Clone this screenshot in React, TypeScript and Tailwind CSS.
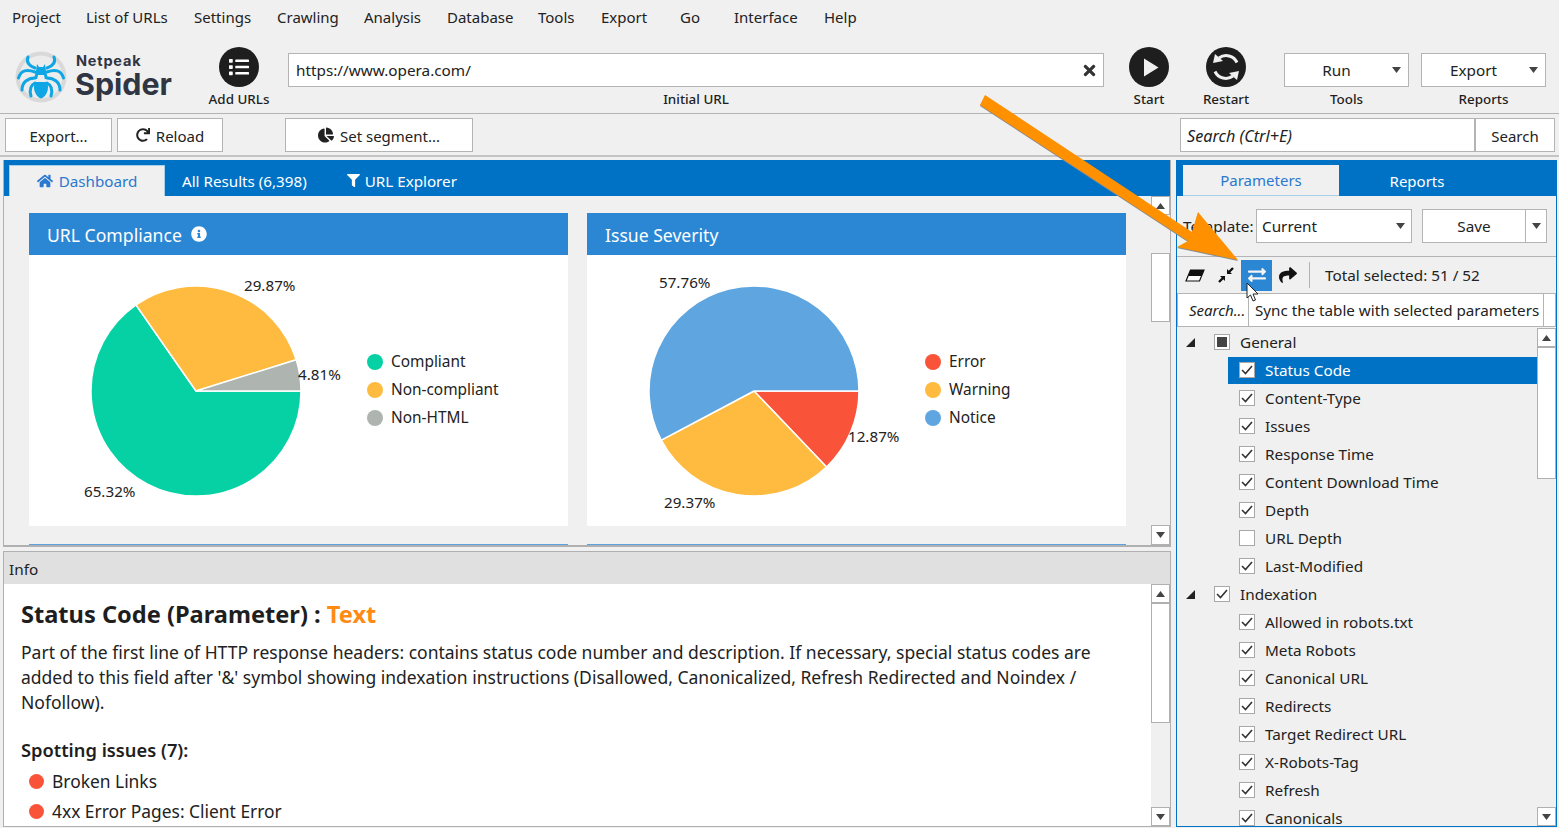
import React from "react";
import { FaList, FaRedo, FaChartPie, FaHome, FaFilter, FaInfoCircle, FaTimes, FaExchangeAlt, FaShare } from "react-icons/fa";

const Tri = ({ up = false, className = "" }: { up?: boolean; className?: string }) => (
  <svg width="9" height="6" viewBox="0 0 9 6" className={className}>
    <polygon points={up ? "4.5,0 9,6 0,6" : "0,0 9,0 4.5,6"} fill="#444" />
  </svg>
);

const ScrollBtn = ({ up = false, h = "h-[19px]" }: { up?: boolean; h?: string }) => (
  <div className={`w-full ${h} shrink-0 bg-white border border-[#b0b0b0] flex items-center justify-center`}>
    <Tri up={up} />
  </div>
);

const Btn = ({ children, className = "" }: { children: React.ReactNode; className?: string }) => (
  <div className={`h-[34px] pt-[2px] bg-white border border-[#b4b4b4] flex items-center justify-center gap-[6px] ${className}`}>{children}</div>
);

const ToolCol = ({ label, className, children, end = false }: { label: string; className: string; children: React.ReactNode; end?: boolean }) => (
  <div className={`flex flex-col items-center shrink-0 ${className}`}>
    <div className={`h-[40px] w-full flex justify-center ${end ? "items-end" : "items-center"}`}>{children}</div>
    <div className="mt-[4px] h-[16px] leading-[16px] text-[13.4px] font-medium text-[#1e1e1e] whitespace-nowrap">{label}</div>
  </div>
);

const Circle = ({ children }: { children: React.ReactNode }) => (
  <div className="w-[40px] h-[40px] rounded-full bg-[#1e1e1e] flex items-center justify-center text-white">{children}</div>
);

const DropBtn = ({ label }: { label: string }) => (
  <div className="relative w-[125px] h-[34px] pt-[1px] bg-white border border-[#b4b4b4] flex items-center justify-center text-[15.3px] pr-[20px]">
    {label}
    <Tri className="absolute right-[7px] top-[13px]" />
  </div>
);

const Logo = () => (
  <svg width="52" height="52" viewBox="0 0 52 52" className="shrink-0">
    <circle cx="26" cy="26" r="25.5" fill="#d9d9d9" />
    <circle cx="26" cy="26" r="21.5" fill="#ececec" />
    <g fill="none" stroke="#0ea6e4" strokeWidth="3" strokeLinecap="round">
      <path d="M20 17 C14 15 11 11 13 6" />
      <path d="M32 17 C38 15 41 11 39 6" />
      <path d="M20 21 C12 18 6 19 3.5 27" />
      <path d="M32 21 C40 18 46 19 48.5 27" />
      <path d="M20 27 C13 27 7 31 7 39" />
      <path d="M32 27 C39 27 45 31 45 39" />
      <path d="M20 32 C16 34 14 38 16 45" />
      <path d="M32 32 C36 34 38 38 36 45" />
    </g>
    <polygon points="22,13 24,16 28,16 30,13 31,20 33,28 19,28 21,20" fill="#0ea6e4" />
    <path d="M20 31 L32 31 C35 38 31 46 26 47.5 C21 46 17 38 20 31Z" fill="#0ea6e4" />
    <polygon points="23,24 29,24 30,29 22,29" fill="#ececec" />
  </svg>
);

const polar = (cx: number, cy: number, r: number, deg: number) => {
  const a = (deg * Math.PI) / 180;
  return [cx + r * Math.cos(a), cy + r * Math.sin(a)];
};

const Pie = ({ slices, labels }: { slices: { from: number; to: number; color: string }[]; labels: { x: number; y: number; t: string }[] }) => (
  <svg width="339" height="271" viewBox="0 0 339 271" className="shrink-0">
    {slices.map((s, i) => {
      const [x1, y1] = polar(167, 136, 105, s.from);
      const [x2, y2] = polar(167, 136, 105, s.to);
      const large = s.to - s.from > 180 ? 1 : 0;
      return <path key={i} d={`M167 136 L${x1} ${y1} A105 105 0 ${large} 1 ${x2} ${y2} Z`} fill={s.color} stroke="#fff" strokeWidth="1.5" />;
    })}
    {labels.map((l) => (
      <text key={l.t} x={l.x} y={l.y} fontSize="15.2" fill="#222">{l.t}</text>
    ))}
  </svg>
);

const Legend = ({ items }: { items: [string, string][] }) => (
  <div className="flex flex-col gap-[8px] -mt-[1px] -ml-[1px]">
    {items.map(([t, c]) => (
      <div key={t} className="flex items-center h-[20px] gap-[8px] text-[15.4px] leading-[20px] text-[#222]">
        <span className="w-[16px] h-[16px] rounded-full shrink-0" style={{ backgroundColor: c }} />
        {t}
      </div>
    ))}
  </div>
);

const Card = ({ title, icon, children }: { title: string; icon?: React.ReactNode; children?: React.ReactNode }) => (
  <div className="w-[539px] shrink-0">
    <div className="h-[42px] pt-[2px] bg-[#2b87d4] text-white flex items-center pl-[18px] gap-[9px] text-[17.6px]">
      {title}
      {icon}
    </div>
    <div className="h-[271px] bg-white flex items-center">{children}</div>
  </div>
);

const Check = ({ on = true, dark = false }: { on?: boolean; dark?: boolean }) => (
  <span className="w-[16px] h-[16px] bg-white border border-[#a8a8a8] shrink-0 flex items-center justify-center">
    {dark && <span className="w-[10px] h-[10px] bg-[#444]" />}
    {on && !dark && (
      <svg width="14" height="14" viewBox="0 0 14 14">
        <path d="M2 7 L5.5 10.5 L12 3" fill="none" stroke="#333" strokeWidth="1.6" />
      </svg>
    )}
  </span>
);

const Group = ({ label, dark }: { label: string; dark?: boolean }) => (
  <div className="h-[28px] flex items-center pl-[9px] shrink-0">
    <svg width="9" height="9" viewBox="0 0 9 9" className="shrink-0">
      <polygon points="9,0 9,9 0,9" fill="#222" />
    </svg>
    <span className="ml-[19px]"><Check dark={dark} /></span>
    <span className="ml-[10px]">{label}</span>
  </div>
);

const Item = ({ label, on = true, selected = false }: { label: string; on?: boolean; selected?: boolean }) => (
  <div className="h-[28px] pl-[51px] flex items-center shrink-0">
    <div className={`w-full h-[27px] flex items-center pl-[11px] ${selected ? "bg-[#0072c6] text-white" : ""}`}>
      <Check on={on} />
      <span className="ml-[10px]">{label}</span>
    </div>
  </div>
);

const general = ["Content-Type", "Issues", "Response Time", "Content Download Time", "Depth"];
const index = ["Allowed in robots.txt", "Meta Robots", "Canonical URL", "Redirects", "Target Redirect URL", "X-Robots-Tag", "Refresh", "Canonicals"];
const menu: [string, string][] = [
  ["Project", "w-[74px]"], ["List of URLs", "w-[108px]"], ["Settings", "w-[83px]"], ["Crawling", "w-[87px]"], ["Analysis", "w-[83px]"],
  ["Database", "w-[91px]"], ["Tools", "w-[63px]"], ["Export", "w-[79px]"], ["Go", "w-[54px]"], ["Interface", "w-[90px]"], ["Help", "w-[60px]"],
];

export default function App() {
  return (
    <div className="relative w-[1559px] h-[828px] overflow-hidden bg-[#f0f0f0] text-[#222] text-[15.3px] font-['Noto_Sans',sans-serif] flex flex-col">
      <div className="h-[36px] shrink-0 flex items-center pl-[12px] pb-[2px] text-[15px]">
        {menu.map(([m, w]) => <div key={m} className={w}>{m}</div>)}
      </div>

      <div className="h-[78px] shrink-0 border-b border-[#b4b4b4] flex items-start pt-[11px]">
        <div className="w-[184px] ml-[15px] h-[56px] flex items-center shrink-0 pt-[3px]">
          <Logo />
          <div className="ml-[8px] font-['Inter',sans-serif] font-bold text-[#2f3542] flex flex-col">
            <span className="ml-[1px] text-[14.5px] leading-[15px] tracking-[0.8px]">Netpeak</span>
            <span className="text-[30.4px] leading-[33px]">Spider</span>
          </div>
        </div>
        <ToolCol label="Add URLs" className="w-[80px]"><Circle><FaList size={20} /></Circle></ToolCol>
        <ToolCol label="Initial URL" className="w-[816px] ml-[9px]" end>
          <div className="w-full h-[34px] bg-white border border-[#b4b4b4] flex items-center justify-between pl-[7px] pr-[5px]">
            <span>https://www.opera.com/</span>
            <FaTimes size={17} className="text-[#333]" />
          </div>
        </ToolCol>
        <ToolCol label="Start" className="w-[60px] ml-[15px]">
          <Circle>
            <svg width="16" height="19" viewBox="0 0 16 19" className="ml-[3px]"><polygon points="1,0.5 15.5,9.5 1,18.5" fill="#f0f0f0" /></svg>
          </Circle>
        </ToolCol>
        <ToolCol label="Restart" className="w-[60px] ml-[17px]">
          <Circle>
            <svg width="40" height="40" viewBox="0 0 40 40">
              <path d="M31 15.5 A12 12 0 0 0 13 11" fill="none" stroke="#f0f0f0" strokeWidth="3" />
              <polygon points="7,16 9,7 17,14" fill="#f0f0f0" />
              <path d="M9 24.5 A12 12 0 0 0 27 29" fill="none" stroke="#f0f0f0" strokeWidth="3" />
              <polygon points="33,24 31,33 23,26" fill="#f0f0f0" />
            </svg>
          </Circle>
        </ToolCol>
        <ToolCol label="Tools" className="w-[125px] ml-[28px]" end><DropBtn label="Run" /></ToolCol>
        <ToolCol label="Reports" className="w-[125px] ml-[12px]" end><DropBtn label="Export" /></ToolCol>
      </div>

      <div className="h-[43px] shrink-0 border-b-2 border-[#c4c4c4] flex items-start pt-[4px] pl-[5px] text-[15px]">
        <Btn className="w-[107px]">Export...</Btn>
        <Btn className="w-[106px] ml-[5px]"><FaRedo size={14} className="text-[#222] -mt-[2px]" />Reload</Btn>
        <Btn className="w-[188px] ml-[62px]"><FaChartPie size={16} className="text-[#222] -mt-[2px]" />Set segment...</Btn>
        <div className="w-[295px] ml-[707px] h-[34px] pt-[2px] bg-white border border-[#b4b4b4] flex items-center pl-[6px] italic text-[16.2px]">Search (Ctrl+E)</div>
        <Btn className="w-[80px]">Search</Btn>
      </div>

      <div className="flex-1 min-h-0 flex pt-[3px] pl-[3px] pr-[2px] pb-[1px] gap-[5px]">
        <div className="w-[1168px] flex flex-col gap-[4px] shrink-0">
          <div className="h-[387px] shrink-0 border-x border-b-2 border-[#b0b0b0] flex flex-col overflow-hidden">
            <div className="h-[36px] shrink-0 bg-[#0072c6] flex items-end pl-[5px] text-[15.2px] text-white">
              <div className="w-[156px] h-[31px] pt-[1px] bg-[#f0f0f0] border-x border-t border-[#a8cfe8] flex items-center justify-center gap-[6px] text-[#2b78cf]">
                <FaHome size={16} className="-mt-[2px]" />Dashboard
              </div>
              <div className="ml-[17px] h-[31px] pt-[1px] flex items-center">All Results (6,398)</div>
              <div className="ml-[41px] h-[31px] pt-[1px] flex items-center gap-[5px]"><FaFilter size={13} className="-ml-[1px] -mt-[2px]" />URL Explorer</div>
            </div>
            <div className="flex-1 min-h-0 flex">
              <div className="flex-1 min-w-0 pl-[25px] pt-[17px] flex flex-col gap-[18px] overflow-hidden">
                <div className="flex gap-[19px]">
                  <Card title="URL Compliance" icon={<FaInfoCircle size={16} className="-mt-[2px]" />}>
                    <Pie
                      slices={[
                        { from: 0, to: 235.14, color: "#05d1a5" },
                        { from: 235.14, to: 342.68, color: "#ffbb40" },
                        { from: 342.68, to: 360, color: "#aeb4af" },
                      ]}
                      labels={[{ x: 215, y: 36, t: "29.87%" }, { x: 269, y: 125, t: "4.81%" }, { x: 55, y: 242, t: "65.32%" }]}
                    />
                    <Legend items={[["Compliant", "#05d1a5"], ["Non-compliant", "#ffbb40"], ["Non-HTML", "#aeb4af"]]} />
                  </Card>
                  <Card title="Issue Severity">
                    <Pie
                      slices={[
                        { from: 0, to: 46.33, color: "#f95439" },
                        { from: 46.33, to: 152.06, color: "#ffbb40" },
                        { from: 152.06, to: 360, color: "#5fa5e0" },
                      ]}
                      labels={[{ x: 72, y: 33, t: "57.76%" }, { x: 261, y: 187, t: "12.87%" }, { x: 77, y: 253, t: "29.37%" }]}
                    />
                    <Legend items={[["Error", "#f95439"], ["Warning", "#ffbb40"], ["Notice", "#5fa5e0"]]} />
                  </Card>
                </div>
                <div className="flex gap-[19px] shrink-0">
                  <div className="w-[539px] h-[10px] bg-[#5ba3e0]" />
                  <div className="w-[539px] h-[10px] bg-[#5ba3e0]" />
                </div>
              </div>
              <div className="w-[19px] shrink-0 flex flex-col">
                <ScrollBtn up />
                <div className="h-[38px] shrink-0" />
                <div className="h-[69px] shrink-0 bg-white border border-[#b0b0b0]" />
                <div className="flex-1" />
                <ScrollBtn h="h-[20px]" />
              </div>
            </div>
          </div>

          <div className="flex-1 min-h-0 border border-[#b0b0b0] flex flex-col">
            <div className="h-[32px] pt-[2px] shrink-0 bg-[#e0e0e0] flex items-center pl-[5px]">Info</div>
            <div className="flex-1 min-h-0 bg-white flex">
              <div className="flex-1 min-w-0 pl-[17px] pr-[8px] pt-[14px] overflow-hidden">
                <div className="text-[23.6px] leading-[32px] font-bold text-[#1e1e1e]">
                  Status Code (Parameter) : <span className="text-[#ff8a14]">Text</span>
                </div>
                <p className="mt-[10px] text-[17.5px] leading-[25px] text-[#222]">
                  Part of the first line of HTTP response headers: contains status code number and description. If necessary, special status codes are added to this field after '&' symbol showing indexation instructions (Disallowed, Canonicalized, Refresh Redirected and Noindex / Nofollow).
                </p>
                <div className="mt-[22px] text-[18.3px] leading-[25px] font-semibold text-[#1e1e1e]">Spotting issues (7):</div>
                <div className="mt-[4px] flex flex-col text-[17.4px] leading-[30px] pl-[8px]">
                  {["Broken Links", "4xx Error Pages: Client Error"].map((t) => (
                    <div key={t} className="flex items-center gap-[8px]">
                      <span className="w-[15px] h-[15px] rounded-full bg-[#f95439] shrink-0" />
                      {t}
                    </div>
                  ))}
                </div>
              </div>
              <div className="w-[19px] shrink-0 flex flex-col bg-[#f0f0f0]">
                <ScrollBtn up />
                <div className="h-[120px] shrink-0 bg-white border border-[#b0b0b0]" />
                <div className="flex-1" />
                <ScrollBtn />
              </div>
            </div>
          </div>
        </div>

        <div className="w-[381px] shrink-0 border-x border-b border-[#0072c6] flex flex-col overflow-hidden">
          <div className="h-[36px] shrink-0 bg-[#0072c6] flex items-end pl-[6px] text-[15px] text-white">
            <div className="w-[156px] h-[31px] pt-[1px] bg-[#f0f0f0] border-b border-[#a8cfe8] flex items-center justify-center text-[#2b78cf]">Parameters</div>
            <div className="w-[156px] h-[31px] pt-[1px] flex items-center justify-center">Reports</div>
          </div>
          <div className="h-[61px] shrink-0 border-b border-[#b4b4b4] flex items-center pl-[6px]">
            <span className="w-[73px] shrink-0">Template:</span>
            <div className="relative w-[156px] h-[34px] bg-white border border-[#b4b4b4] flex items-center pl-[5px]">
              Current
              <Tri className="absolute right-[6px] top-[13px]" />
            </div>
            <div className="ml-[10px] w-[125px] h-[34px] bg-white border border-[#b4b4b4] flex">
              <div className="w-[103px] border-r border-[#b4b4b4] flex items-center justify-center">Save</div>
              <div className="flex-1 flex items-center justify-center"><Tri /></div>
            </div>
          </div>
          <div className="h-[36px] shrink-0 flex items-center pl-[8px]">
            <svg width="20" height="13" viewBox="0 0 20 13" className="shrink-0">
              <polygon points="5.5,1 19,1 14.5,12 1,12" fill="#fff" stroke="#111" strokeWidth="1.2" />
              <polygon points="5.5,1 19,1 16.5,7 3,7" fill="#111" />
            </svg>
            <svg width="16" height="16" viewBox="0 0 16 16" className="ml-[13px] shrink-0">
              <path d="M15 1 L10.5 5.5 M1 15 L5.5 10.5" stroke="#111" strokeWidth="2.4" />
              <polygon points="9,2 9,7 14,7" fill="#111" />
              <polygon points="2,9 7,9 7,14" fill="#111" />
            </svg>
            <div className="ml-[7px] w-[31px] h-[31px] bg-[#2b87d4] text-[#f4f4f4] flex items-center justify-center shrink-0">
              <FaExchangeAlt size={18} />
            </div>
            <FaShare size={18} className="ml-[7px] shrink-0 text-[#111]" />
            <div className="ml-[12px] w-px h-[26px] bg-[#b4b4b4] shrink-0" />
            <span className="ml-[15px] whitespace-nowrap">Total selected: 51 / 52</span>
          </div>
          <div className="h-[34px] shrink-0 border border-[#b4b4b4] flex bg-white">
            <div className="w-[71px] border-r border-[#b4b4b4] flex items-center pl-[11px] text-[15px] italic whitespace-nowrap overflow-hidden">Search...</div>
            <div className="w-[295px] border-r border-[#b4b4b4] flex items-center pl-[6px] text-[15.2px] whitespace-nowrap">Sync the table with selected parameters</div>
          </div>
          <div className="flex-1 min-h-0 flex">
            <div className="flex-1 min-w-0 flex flex-col overflow-hidden pt-px">
              <Group label="General" dark />
              <Item label="Status Code" selected />
              {general.map((t) => <Item key={t} label={t} />)}
              <Item label="URL Depth" on={false} />
              <Item label="Last-Modified" />
              <Group label="Indexation" />
              {index.map((t) => <Item key={t} label={t} />)}
            </div>
            <div className="w-[19px] shrink-0 flex flex-col pt-px">
              <ScrollBtn up />
              <div className="h-[132px] shrink-0 bg-white border border-[#b0b0b0]" />
              <div className="flex-1" />
              <ScrollBtn />
            </div>
          </div>
        </div>
      </div>

      <svg width="1559" height="828" viewBox="0 0 1559 828" className="absolute left-0 top-0 pointer-events-none">
        <polygon points="985,96 1192,233 1198,213 1238,261 1177,248 1188,242 980,106" fill="#8a8a8a" />
        <polygon points="985,95 1192,232 1198,212 1238,260 1177,247 1188,241 980,105" fill="#ff9000" />
        <polygon points="1247,283 1247,298 1250.5,295 1253,301 1255.5,300 1253,294 1258,294" fill="#fff" stroke="#222" strokeWidth="1" />
      </svg>
    </div>
  );
}
